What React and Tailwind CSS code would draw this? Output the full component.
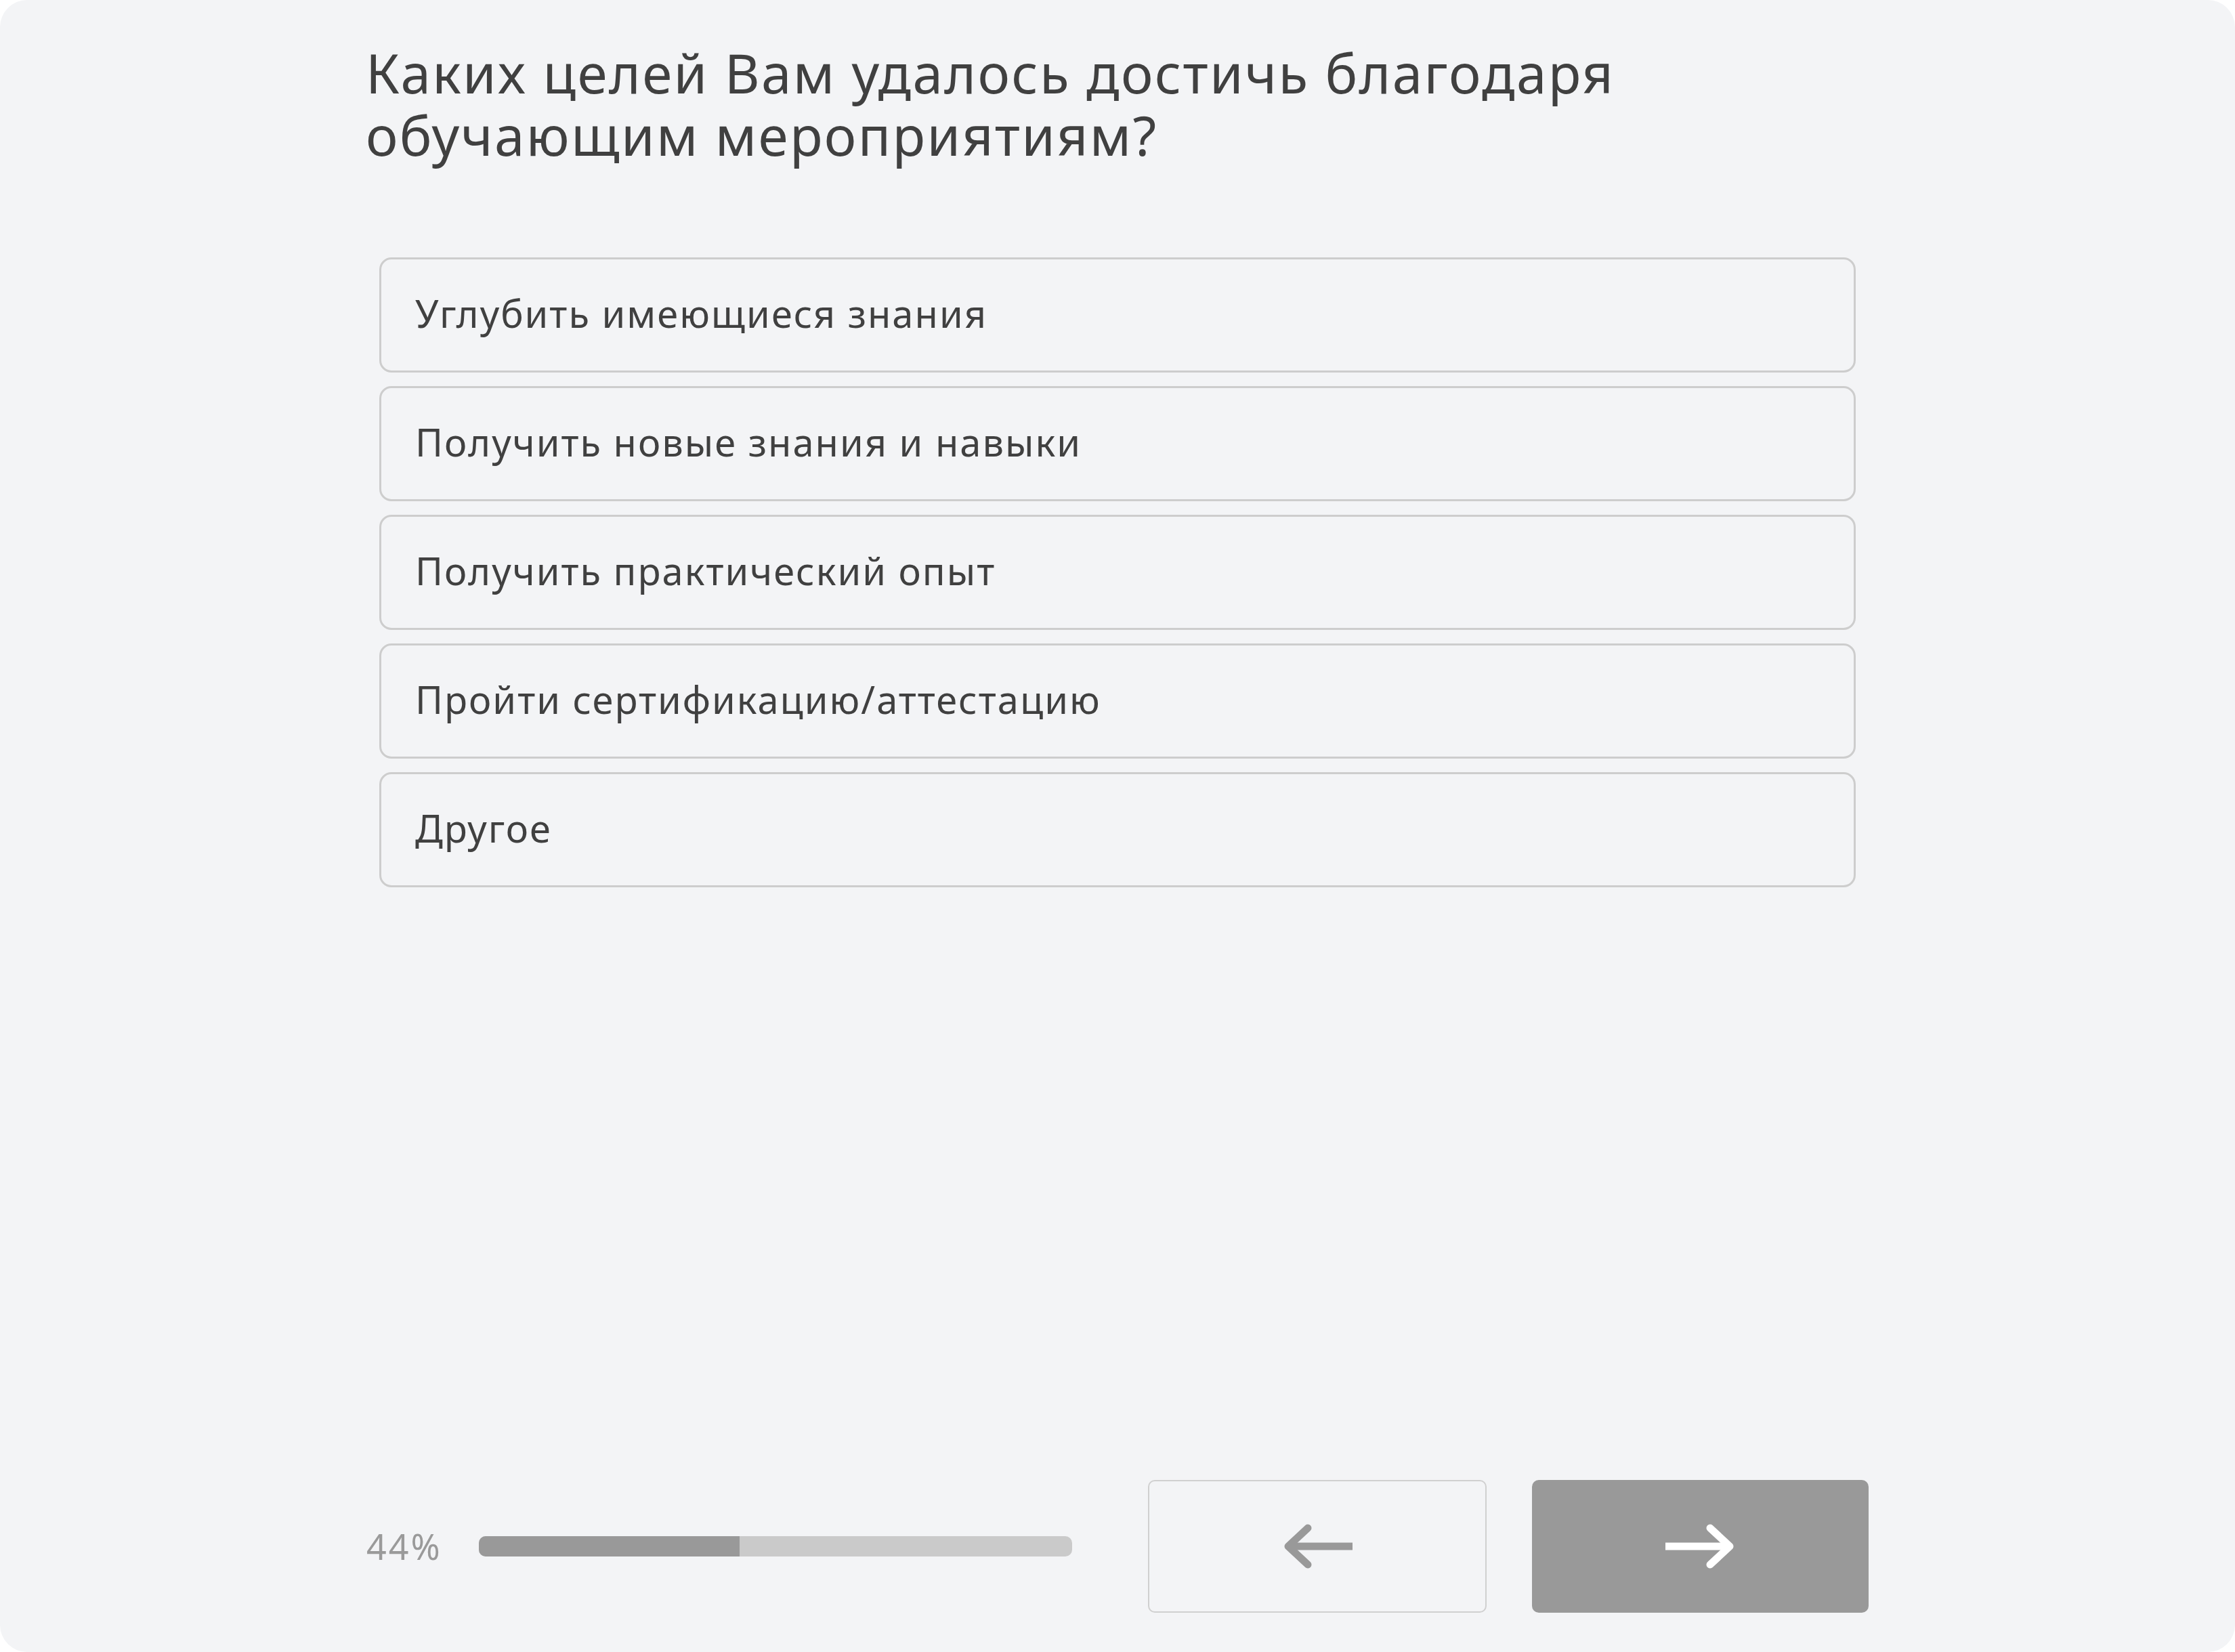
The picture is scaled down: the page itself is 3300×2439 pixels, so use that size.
import React from "react";

const options = [
  "Углубить имеющиеся знания",
  "Получить новые знания и навыки",
  "Получить практический опыт",
  "Пройти сертификацию/аттестацию",
  "Другое",
];

function ArrowLeft({ color }) {
  return (
    <svg width="104" height="66" viewBox="0 0 104 66" fill="none">
      <polyline points="38,6 9,33 38,60" stroke={color} strokeWidth="11" strokeLinecap="round" strokeLinejoin="round" />
      <line x1="14" y1="33" x2="104" y2="33" stroke={color} strokeWidth="11" />
    </svg>
  );
}

function ArrowRight({ color }) {
  return (
    <svg width="104" height="66" viewBox="0 0 104 66" fill="none">
      <polyline points="66,6 95,33 66,60" stroke={color} strokeWidth="11" strokeLinecap="round" strokeLinejoin="round" />
      <line x1="0" y1="33" x2="90" y2="33" stroke={color} strokeWidth="11" strokeLinecap="round" />
    </svg>
  );
}

export default function App() {
  const progress = 44;
  return (
    <div className="w-[3300px] h-[2439px] bg-white" style={{ fontFamily: '"Noto Sans", "Open Sans", sans-serif' }}>
      <div className="h-full rounded-[40px] bg-[#f3f4f6] flex flex-col">
        <div className="w-[2224px] mx-auto flex flex-col flex-1 pb-[58px]">
          <h1 className="pt-[61px] pl-[2px] text-[80px] leading-[92px] tracking-[2.3px] font-normal text-[#404040]">
            <span className="block">Каких целей Вам удалось достичь благодаря</span>
            <span className="block">обучающим мероприятиям?</span>
          </h1>
          <div className="mt-[135px] px-[22px] flex flex-col gap-[20px]">
            {options.map((o) => (
              <div
                key={o}
                className="h-[170px] flex items-center rounded-[18px] border-[3px] border-[#cdcdcd] pl-[50px] pb-[6px] text-[56px] tracking-[2px] text-[#404040]"
              >
                {o}
              </div>
            ))}
          </div>
          <div className="mt-auto flex items-center">
            <div className="w-[169px] pl-[3px] text-[52px] leading-none tracking-[3px] text-[#9a9a9a]">{progress}%</div>
            <div className="w-[876px] h-[30px] rounded-[10px] bg-[#cacaca] overflow-hidden">
              <div className="h-full bg-[#999999]" style={{ width: `${progress}%` }} />
            </div>
            <button className="ml-[112px] w-[500px] h-[196px] rounded-[10px] border-[2px] border-[#d0d0d0] flex items-center justify-center">
              <ArrowLeft color="#999999" />
            </button>
            <button className="ml-[67px] w-[497px] h-[196px] rounded-[10px] bg-[#999999] flex items-center justify-center">
              <ArrowRight color="#ffffff" />
            </button>
          </div>
        </div>
      </div>
    </div>
  );
}
